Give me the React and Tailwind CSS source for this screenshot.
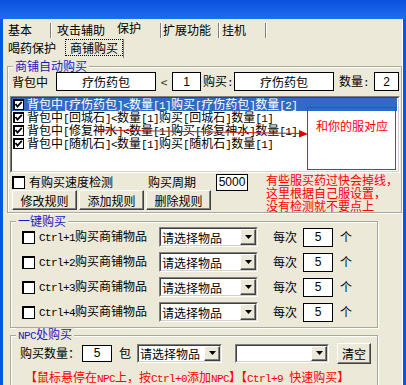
import React from "react";

function Mix({ s }) {
  const parts = s.split(/([\x20-\x7e]+)/);
  return (
    <>
      {parts.map((p, i) =>
        /^[\x20-\x7e]+$/.test(p) ? (
          <span key={i} className="font-['Liberation_Mono',monospace] text-[11px] tracking-[-0.6px] whitespace-pre">
            {p}
          </span>
        ) : (
          <span key={i}>{p}</span>
        )
      )}
    </>
  );
}

function Check({ checked, small }) {
  return (
    <span
      className={
        (small ? "w-[11px] h-[11px] " : "w-[13px] h-[13px] ") +
        "inline-flex shrink-0 items-center justify-center bg-white border border-black shadow-[inset_1px_1px_0_#000]"
      }
    >
      {checked && (
        <svg width="9" height="9" viewBox="0 0 9 9">
          <polyline points="1.5,4 3.5,6.5 7.8,1.8" fill="none" stroke="#000" strokeWidth="1.8" />
        </svg>
      )}
    </span>
  );
}

function Input({ className, children, sans }) {
  return (
    <div
      className={
        "flex items-center justify-center bg-white border border-black shrink-0 leading-[12px] whitespace-nowrap " +
        (sans ? "font-['Liberation_Sans',sans-serif] text-[12px] " : "") +
        className
      }
    >
      {children}
    </div>
  );
}

function Combo({ className, text }) {
  return (
    <div
      className={
        "flex shrink-0 bg-white border border-t-[#808080] border-l-[#808080] border-r-white border-b-white " +
        className
      }
    >
      <div className="flex flex-1 items-center border border-t-[#404040] border-l-[#404040] border-r-[#d4d0c8] border-b-[#d4d0c8] pl-[1px]">
        <span className="flex-1 leading-[13px] whitespace-nowrap">{text}</span>
        <span className="w-[16px] shrink-0 self-stretch flex items-center justify-center bg-[#ece9d8] border border-t-white border-l-white border-r-[#404040] border-b-[#404040] shadow-[inset_-1px_-1px_0_#808080]">
          <svg width="7" height="4" viewBox="0 0 7 4">
            <polygon points="0,0 7,0 3.5,4" fill="#000" />
          </svg>
        </span>
      </div>
    </div>
  );
}

function Btn({ className, children }) {
  return (
    <div
      className={
        "flex items-center justify-center shrink-0 whitespace-nowrap bg-[#ece9d8] border border-t-white border-l-white border-r-[#404040] border-b-[#404040] shadow-[inset_-1px_-1px_0_#808080] leading-[13px] " +
        className
      }
    >
      {children}
    </div>
  );
}

function Sep() {
  return <span className="w-[2px] h-[15px] self-end border-l border-[#808080] border-r border-r-white shrink-0" />;
}

const listItems = [
  "背包中[疗伤药包]<数量[1]购买[疗伤药包]数量[2]",
  "背包中[回城石]<数量[1]购买[回城石]数量[1]",
  "背包中[修复神水]<数量[1]购买[修复神水]数量[1]",
  "背包中[随机石]<数量[1]购买[随机石]数量[1]",
];

export default function App() {
  return (
    <div className="w-[406px] h-[385px] overflow-hidden bg-[#ece9d8] flex flex-col relative font-['Noto_Sans_CJK_SC',sans-serif] text-[12px] text-black leading-[14px]">
      <div className="h-[19px] shrink-0 bg-linear-to-b from-[#0a52dc] to-[#1f6cf0]" />
      <div className="flex flex-1 min-h-0">
        <div className="w-[3px] shrink-0 bg-[#0a55e3]" />
        <div className="flex-1 flex flex-col min-w-0">
          {/* tab row 1 */}
          <div className="flex items-end h-[19px] shrink-0 whitespace-nowrap">
            <span className="pl-[5px] w-[47px] pb-[1px] shrink-0">基本</span>
            <Sep />
            <span className="pl-[5px] w-[60px] pb-[1px] shrink-0">攻击辅助</span>
            <span className="pl-[5px] w-[48px] pb-[3px] shrink-0">保护</span>
            <Sep />
            <span className="pl-[1px] w-[56px] pb-[1px] shrink-0">扩展功能</span>
            <Sep />
            <span className="pl-[2px] w-[45px] pb-[1px] shrink-0">挂机</span>
            <Sep />
          </div>
          {/* tab row 2 */}
          <div className="flex items-start h-[20px] shrink-0 whitespace-nowrap">
            <span className="pl-[5px] w-[62px] mt-[3px] shrink-0">喝药保护</span>
            <span className="mt-[1px] h-[17px] w-[58px] shrink-0 border border-dotted border-black flex items-center justify-center leading-[13px]">
              商铺购买
            </span>
            <span className="mt-[1px] h-[19px] w-[1px] bg-[#808080]" />
          </div>

          {/* group 1 */}
          <fieldset className="mt-[2px] ml-[4px] w-[395px] border border-[#aca899] shadow-[inset_1px_1px_0_#fff,1px_1px_0_#fff] shrink-0">
            <legend className="ml-[5px] px-[2px] leading-[12px] text-[#1a1ac8] bg-[#ece9d8]">商铺自动购买</legend>
            <div className="flex items-center h-[19px] whitespace-nowrap">
              <span className="ml-[4px] w-[36px] shrink-0">背包中</span>
              <Input className="ml-[8px] w-[100px] h-[19px]">疗伤药包</Input>
              <span className="w-[16px] shrink-0 text-center text-[#333]">&lt;</span>
              <Input sans className="w-[29px] h-[19px]">1</Input>
              <span className="ml-[2px] w-[31px] shrink-0">
                <Mix s="购买:" />
              </span>
              <Input className="w-[100px] h-[19px]">疗伤药包</Input>
              <span className="ml-[5px] w-[31px] shrink-0">
                <Mix s="数量:" />
              </span>
              <Input sans className="ml-[4px] w-[25px] h-[19px]">2</Input>
            </div>
            <div className="mt-[5px] ml-[2px] w-[390px] h-[77px] bg-white border border-t-[#808080] border-l-[#808080] border-r-white border-b-white">
              <div className="h-full border border-t-[#404040] border-l-[#404040] border-r-[#d4d0c8] border-b-[#d4d0c8] flex flex-col">
                {listItems.map((t, i) => (
                  <div
                    key={i}
                    className={
                      "flex items-center h-[13px] w-[385px] leading-[13px] whitespace-nowrap " +
                      (i === 0 ? "bg-[#316ac5] text-white" : "")
                    }
                  >
                    <span className="ml-[1px] flex">
                      <Check checked small />
                    </span>
                    <span className="ml-[3px]">
                      <Mix s={t} />
                    </span>
                  </div>
                ))}
              </div>
            </div>
            <div className="flex h-[39px]">
              <div className="w-[258px] shrink-0 flex flex-col whitespace-nowrap">
                <div className="flex items-center h-[16px] mt-[1px]">
                  <span className="ml-[4px] flex">
                    <Check />
                  </span>
                  <span className="ml-[4px] w-[84px] shrink-0">有购买速度检测</span>
                  <span className="ml-[35px] w-[48px] shrink-0">购买周期</span>
                  <Input sans className="ml-[20px] w-[32px] h-[17px]">5000</Input>
                </div>
                <div className="flex mt-[0px] ml-[4px] gap-[2px]">
                  <Btn className="w-[65px] h-[20px]">修改规则</Btn>
                  <Btn className="w-[65px] h-[20px]">添加规则</Btn>
                  <Btn className="w-[65px] h-[20px]">删除规则</Btn>
                </div>
              </div>
              <div className="text-[#f00] leading-[13px] whitespace-nowrap">
                <div>有些服买药过快会掉线，</div>
                <div>这里根据自己服设置，</div>
                <div>没有检测就不要点上</div>
              </div>
            </div>
          </fieldset>

          {/* group 2 */}
          <fieldset className="mt-[2px] ml-[7px] w-[368px] border border-[#aca899] shadow-[inset_1px_1px_0_#fff,1px_1px_0_#fff] shrink-0 pb-[5px]">
            <legend className="ml-[5px] px-[2px] leading-[12px] text-[#1a1ac8] bg-[#ece9d8]">一键购买</legend>
            <div className="flex flex-col gap-[5px]">
              {[1, 2, 3, 4].map((n) => (
                <div key={n} className="flex items-center h-[20px] whitespace-nowrap">
                  <span className="ml-[11px] flex">
                    <Check />
                  </span>
                  <span className="ml-[4px] w-[108px] shrink-0">
                    <Mix s={"Ctrl+" + n + "购买商铺物品"} />
                  </span>
                  <Combo className="ml-[12px] w-[99px] h-[20px]" text="请选择物品" />
                  <span className="ml-[15px] w-[24px] shrink-0">每次</span>
                  <Input sans className="ml-[6px] w-[30px] h-[19px]">5</Input>
                  <span className="ml-[7px]">个</span>
                </div>
              ))}
            </div>
          </fieldset>

          {/* group 3 */}
          <fieldset className="ml-[7px] w-[368px] border border-[#aca899] shadow-[inset_1px_1px_0_#fff,1px_1px_0_#fff] shrink-0 pb-[20px]">
            <legend className="ml-[5px] px-[2px] leading-[12px] text-[#1a1ac8] bg-[#ece9d8]">
              <Mix s="NPC处购买" />
            </legend>
            <div className="flex items-center h-[22px] whitespace-nowrap">
              <span className="ml-[9px] w-[60px] shrink-0">购买数量：</span>
              <Input sans className="ml-[2px] w-[30px] h-[17px]">5</Input>
              <span className="ml-[7px] w-[12px] shrink-0">包</span>
              <Combo className="ml-[6px] w-[85px] h-[19px]" text="请选择物品" />
              <Combo className="ml-[13px] w-[94px] h-[19px]" text="" />
              <Btn className="ml-[8px] w-[34px] h-[21px]">清空</Btn>
            </div>
            <div className="mt-[6px] ml-[14px] h-[13px] leading-[13px] text-[#f00] whitespace-nowrap">
              <Mix s="【鼠标悬停在NPC上，按Ctrl+0添加NPC】【Ctrl+9 快速购买】" />
            </div>
          </fieldset>
        </div>
        <div className="w-[1px] shrink-0 bg-white" />
        <div className="w-[3px] shrink-0 bg-[#0a55e3]" />
      </div>

      {/* annotation overlay */}
      <div className="absolute left-[307px] top-[107px] w-[89px] h-[63px] border border-[#d02020]">
        <div className="mt-[11px] ml-[8px] text-[#f00] leading-[13px] whitespace-nowrap">和你的服对应</div>
      </div>
      <svg className="absolute left-0 top-0 pointer-events-none" width="406" height="385">
        <line x1="100" y1="130" x2="301" y2="133.5" stroke="#c02020" strokeWidth="1" />
        <polygon points="299,130 308,134 299,137.5" fill="#e00000" />
      </svg>
    </div>
  );
}
